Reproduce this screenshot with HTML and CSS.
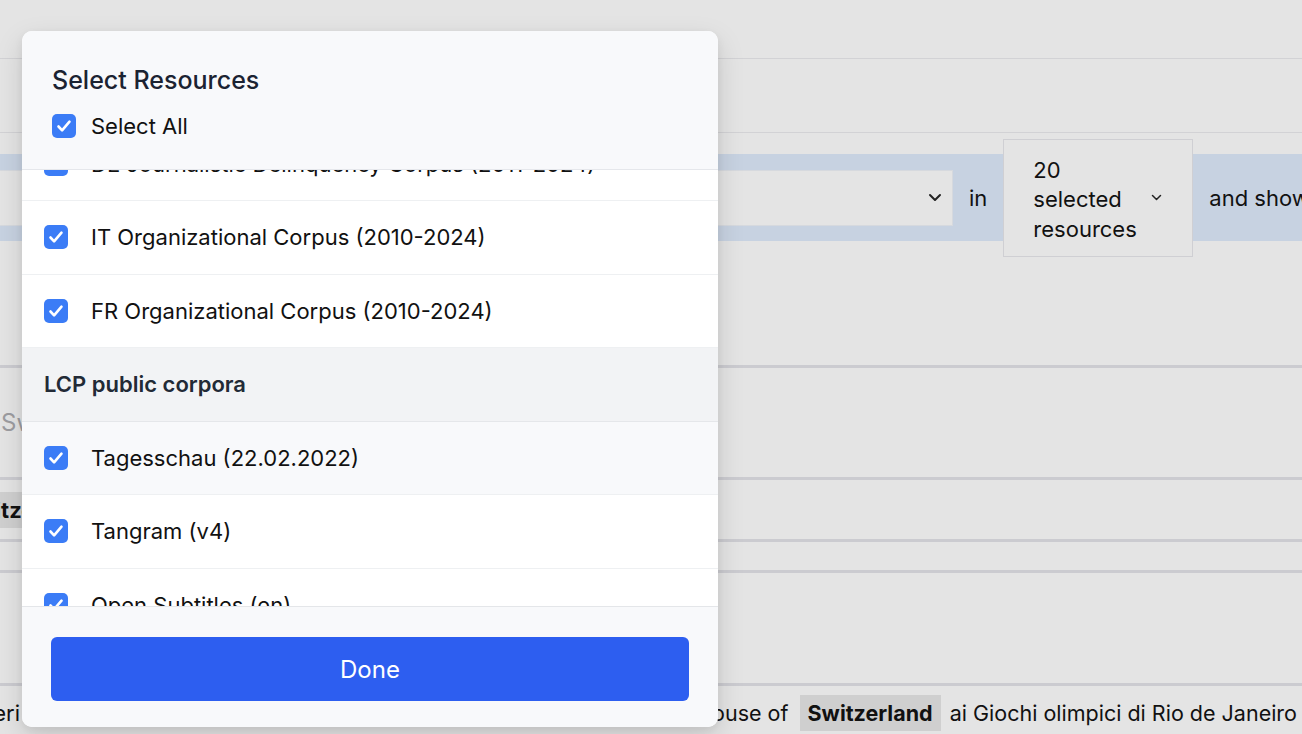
FILE: index.html
```html
<!DOCTYPE html>
<html lang="en">
<head>
  <meta charset="UTF-8">
  <title>Select Resources</title>
  <link rel="stylesheet" href="styles.css">
</head>
<body>

<div class="page">
  <div class="topbar"></div>
  <div class="nav"></div>
  <div class="spacer"></div>

  <div class="query">
    <div class="select">
      <svg width="14" height="9" viewBox="0 0 14 9"><path d="M2 2l5 5 5-5" fill="none" stroke="#222" stroke-width="2" stroke-linecap="round" stroke-linejoin="round"/></svg>
    </div>
    <span class="word">in</span>
    <div class="dropdown">
      <span>20<br>selected<br>resources</span>
      <svg width="11" height="7" viewBox="0 0 11 7"><path d="M1.5 1.5l4 4 4-4" fill="none" stroke="#222" stroke-width="1.5" stroke-linecap="round" stroke-linejoin="round"/></svg>
    </div>
    <span class="word">and show</span>
  </div>

  <div class="block b1"></div>
  <div class="block b2"><span class="placeholder">Switzerland</span></div>
  <div class="block b3"><span class="hl cut">Switzerland</span></div>
  <div class="block b4"></div>
  <div class="block b5"></div>
  <div class="result">
    <span class="left">svizzeri</span>
    <span class="right">la house of <span class="hl">Switzerland</span> ai Giochi olimpici di Rio de Janeiro</span>
  </div>
</div>

<div class="modal">
  <div class="modal-head">
    <h3 class="title">Select Resources</h3>
    <label class="select-all">
      <span class="check"><svg width="24" height="24" viewBox="0 0 24 24"><path d="M6.5 12.5l3.6 3.8 7.4-8.6" fill="none" stroke="#fff" stroke-width="2.6" stroke-linecap="round" stroke-linejoin="round"/></svg></span>
      Select All
    </label>
  </div>

  <div class="list">
    <div class="rows">
      <div class="row">
        <span class="check"><svg width="24" height="24" viewBox="0 0 24 24"><path d="M6.5 12.5l3.6 3.8 7.4-8.6" fill="none" stroke="#fff" stroke-width="2.6" stroke-linecap="round" stroke-linejoin="round"/></svg></span>
        DE Journalistic Delinquency Corpus (2011-2024)
      </div>
      <div class="row">
        <span class="check"><svg width="24" height="24" viewBox="0 0 24 24"><path d="M6.5 12.5l3.6 3.8 7.4-8.6" fill="none" stroke="#fff" stroke-width="2.6" stroke-linecap="round" stroke-linejoin="round"/></svg></span>
        IT Organizational Corpus (2010-2024)
      </div>
      <div class="row">
        <span class="check"><svg width="24" height="24" viewBox="0 0 24 24"><path d="M6.5 12.5l3.6 3.8 7.4-8.6" fill="none" stroke="#fff" stroke-width="2.6" stroke-linecap="round" stroke-linejoin="round"/></svg></span>
        FR Organizational Corpus (2010-2024)
      </div>
      <div class="row group">LCP public corpora</div>
      <div class="row hover">
        <span class="check"><svg width="24" height="24" viewBox="0 0 24 24"><path d="M6.5 12.5l3.6 3.8 7.4-8.6" fill="none" stroke="#fff" stroke-width="2.6" stroke-linecap="round" stroke-linejoin="round"/></svg></span>
        Tagesschau (22.02.2022)
      </div>
      <div class="row">
        <span class="check"><svg width="24" height="24" viewBox="0 0 24 24"><path d="M6.5 12.5l3.6 3.8 7.4-8.6" fill="none" stroke="#fff" stroke-width="2.6" stroke-linecap="round" stroke-linejoin="round"/></svg></span>
        Tangram (v4)
      </div>
      <div class="row">
        <span class="check"><svg width="24" height="24" viewBox="0 0 24 24"><path d="M6.5 12.5l3.6 3.8 7.4-8.6" fill="none" stroke="#fff" stroke-width="2.6" stroke-linecap="round" stroke-linejoin="round"/></svg></span>
        Open Subtitles (en)
      </div>
    </div>
  </div>

  <div class="modal-foot">
    <button class="done">Done</button>
  </div>
</div>

</body>
</html>
```

FILE: styles.css
```css
html, body {
  margin: 0;
  height: 100%;
}
body {
  font-family: Inter, "Noto Sans", sans-serif;
  background: #e4e4e4;
  color: #111;
  overflow: hidden;
}
.page {
  position: relative;
  font-size: 22px;
}
.topbar {
  height: 58px;
  border-bottom: 1px solid #d2d2d5;
}
.nav {
  height: 73px;
  border-bottom: 1px solid #d2d2d5;
}
.spacer {
  height: 21px;
}
.query {
  height: 87px;
  background: #c7d2e1;
  display: flex;
  align-items: center;
}
.query > * {
  flex: none;
}
.select {
  margin-left: -10px;
  width: 963px;
  height: 56px;
  box-sizing: border-box;
  background: #e4e4e4;
  border: 1px solid #d6d9de;
  display: flex;
  align-items: center;
  justify-content: flex-end;
  padding-right: 10px;
}
.word {
  margin: 1px 16px 0;
  white-space: nowrap;
}
.dropdown {
  width: 190px;
  height: 118px;
  box-sizing: border-box;
  background: #e4e4e4;
  border: 1px solid #cfcfd3;
  display: flex;
  align-items: center;
  padding: 5px 30px 0 29px;
  justify-content: space-between;
  line-height: 29.5px;
}
.dropdown svg {
  margin-top: -5px;
}
.block {
  border-bottom: 3px solid #cbcbd0;
  display: flex;
  align-items: center;
}
.b1 { height: 124px; }
.b2 { height: 109px; }
.b3 { height: 59px; }
.b4 { height: 28px; }
.b5 { height: 110px; }
.placeholder {
  margin-left: 1px;
  color: #9c9ca0;
  font-size: 24px;
}
.hl {
  background: #cfcfcf;
  font-weight: 700;
  padding: 5px 8px;
}
.cut {
  margin-left: -46px;
}
.result {
  height: 54px;
  display: flex;
  align-items: center;
  justify-content: space-between;
  white-space: nowrap;
}
.left {
  margin-left: -60px;
}
.right {
  margin-right: 5px;
  font-size: 21.5px;
}
.right .hl {
  margin: 0 3px 0 5px;
}

/* modal */
.modal {
  position: absolute;
  left: 22px;
  top: 31px;
  width: 696px;
  height: 696px;
  background: #fff;
  border-radius: 10px;
  box-shadow: 0 10px 28px rgba(0, 0, 0, 0.13), 0 3px 8px rgba(0, 0, 0, 0.06);
  display: flex;
  flex-direction: column;
  overflow: hidden;
}
.modal-head {
  background: #f8f9fb;
  padding: 35px 30px 31px;
  border-bottom: 1px solid #e5e7eb;
  position: relative;
  z-index: 1;
}
.title {
  margin: 0 0 20px;
  font-size: 25px;
  line-height: 28px;
  font-weight: 500;
  color: #1b2332;
}
.select-all {
  display: flex;
  align-items: center;
  gap: 15px;
  font-size: 22px;
  line-height: 24px;
  color: #111;
}
.check {
  flex: none;
  width: 24px;
  height: 24px;
  border-radius: 5px;
  background: #3b7cf6;
  display: flex;
}
.list {
  flex: 1;
  overflow: hidden;
}
.rows {
  margin-top: -42.5px;
}
.row {
  height: 73.5px;
  box-sizing: border-box;
  border-bottom: 1px solid #eef0f2;
  display: flex;
  align-items: center;
  gap: 23px;
  padding-left: 22px;
  font-size: 22px;
  color: #111;
}
.row.group {
  background: #f2f3f5;
  font-weight: 600;
  color: #222a36;
  border-bottom-color: #e5e7ea;
}
.row.hover {
  background: #f8f9fb;
}
.modal-foot {
  height: 121px;
  box-sizing: border-box;
  background: #f8f9fb;
  border-top: 1px solid #e4e6e9;
  padding: 30px 29px 0;
}
.done {
  display: block;
  width: 100%;
  height: 64px;
  border: 0;
  border-radius: 6px;
  background: #2d5ef0;
  color: #fff;
  font-family: inherit;
  font-size: 24px;
}
```
